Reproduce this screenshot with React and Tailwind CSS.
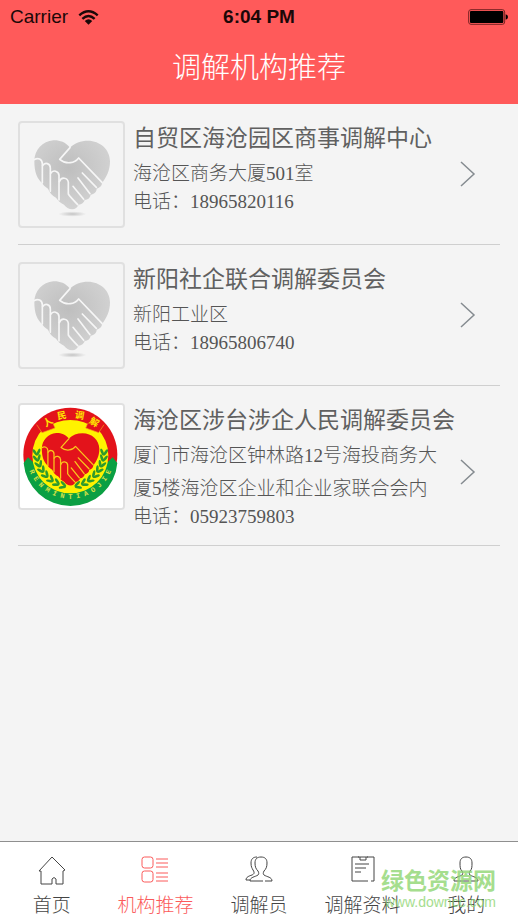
const organizations = [
  {
    name: "自贸区海沧园区商事调解中心",
    address: "海沧区商务大厦501室",
    phone: "18965820116",
  },
  {
    name: "新阳社企联合调解委员会",
    address: "新阳工业区",
    phone: "18965806740",
  },
  {
    name: "海沧区涉台涉企人民调解委员会",
    address: "厦门市海沧区钟林路12号海投商务大厦5楼海沧区企业和企业家联合会内",
    phone: "05923759803",
    emblem: true,
  },
];

const HandshakeHeart = ({ fill, line, width }) => (
  <g strokeLinecap="round" strokeLinejoin="round">
    <path
      fill={fill}
      d="M180 97C166 79 146 74 130 75C98 77 73 104 73 137C73 172 82 190 96 203C100 210 105 214 114 220C119 232 126 240 138 247C144 256 151 262 162 268C168 276 176 282 187 282C196 282 202 276 206 268C215 267 222 262 224 254C234 253 241 247 242 238C252 236 260 230 260 220C270 218 276 211 276 203C290 186 300 164 300 138C300 102 270 76 234 76C212 76 194 83 180 97Z"
    />
    <g fill="none" stroke={line} strokeWidth={width}>
      <path d="M180 97L149 132Q163 144 181 142Q196 141 206 128L276 201" />
      <path d="M217 173L259 216M204 188L240 235M189 213L221 252" />
      <path d="M73 133C84 126 96 131 97 145V203" />
      <path d="M98 151C105 139 121 144 121 158V228" />
      <path d="M122 174C129 162 146 167 147 180V254" />
      <path d="M148 199C154 183 173 187 175 201V236Q180 244 203 268" />
    </g>
  </g>
);

const PlaceholderLogo = () => (
  <svg viewBox="30 23 309 309" className="h-full w-full" aria-hidden="true">
    <defs>
      <radialGradient id="grey-heart" cx="0.45" cy="0.4" r="0.65">
        <stop offset="0" stopColor="#bebebe" />
        <stop offset="1" stopColor="#d4d4d4" />
      </radialGradient>
      <radialGradient id="heart-shadow">
        <stop offset="0" stopColor="#c4c4c4" />
        <stop offset="1" stopColor="#f4f4f4" />
      </radialGradient>
    </defs>
    <ellipse cx="187" cy="296" rx="42" ry="8" fill="url(#heart-shadow)" />
    <HandshakeHeart fill="url(#grey-heart)" line="#f6f6f6" width="5" />
  </svg>
);

const leaves = [
  [80, 172, -6],
  [81, 190, -12],
  [86, 208, -22],
  [94, 225, -32],
  [105, 241, -42],
  [120, 255, -52],
  [137, 266, -62],
  [156, 274, -72],
];

const Wheat = () => (
  <g fill="#2f9a2c">
    {leaves.map(([x, y, angle]) => (
      <g key={y} transform={`translate(${x} ${y}) rotate(${angle})`}>
        <ellipse cx="-6" cy="0" rx="4" ry="11" transform="rotate(-28)" />
        <ellipse cx="6" cy="0" rx="4" ry="11" transform="rotate(28)" />
      </g>
    ))}
  </g>
);

const EmblemLogo = () => (
  <svg
    viewBox="30 33 309 309"
    className="h-full w-full bg-white"
    aria-hidden="true"
  >
    <defs>
      <path id="emblem-bottom" d="M49 182A132 132 0 0 0 313 182" />
    </defs>
    <circle cx="181" cy="182" r="141" fill="#e3131b" />
    <path
      fill="#0b9f43"
      d="M41 207L54 190L70 205H292L308 190L322 207A141 141 0 0 1 41 207Z"
    />
    <circle cx="181" cy="184" r="114" fill="#fff200" />
    {/* Ribbon across the top with folded ends */}
    <path
      d="M76 92Q181 -6 286 92L262 106Q181 50 100 106Z"
      fill="#e3131b"
    />
    <path
      d="M80 92L96 116L135 102L129 88M282 92L266 116L227 102L233 88"
      fill="#e3131b"
      stroke="#f7a51c"
      strokeWidth="2"
    />
    <Wheat />
    <g transform="translate(362 0) scale(-1 1)">
      <Wheat />
    </g>
    <g transform="translate(40 60) scale(0.76)">
      <HandshakeHeart fill="#e3131b" line="#f9c81c" width="5" />
    </g>
    <g
      fill="#ffe600"
      fontSize="28"
      fontWeight="700"
      textAnchor="middle"
      fontFamily="'Noto Sans CJK SC', sans-serif"
    >
      <text transform="translate(119 92) rotate(-32)">人</text>
      <text transform="translate(157 74) rotate(-10)">民</text>
      <text transform="translate(207 74) rotate(10)">调</text>
      <text transform="translate(247 93) rotate(32)">解</text>
    </g>
    <text
      fill="#d8e34a"
      fontSize="21"
      fontWeight="700"
      textAnchor="middle"
      fontFamily="'Liberation Mono', monospace"
    >
      <textPath href="#emblem-bottom" startOffset="50%">
        R E N M I N T I A O J I E
      </textPath>
    </text>
  </svg>
);

const StatusBar = () => (
  <div className="grid h-[34px] grid-cols-3 items-center px-[10px] font-['Liberation_Sans',sans-serif] text-[19px] leading-6 text-[#1b0808]">
    <div className="flex items-center gap-[10px]">
      <span>Carrier</span>
      <svg viewBox="0 0 60 44" className="h-[15px] w-[21px]" aria-label="Wi-Fi">
        <g fill="none" stroke="#1b0808" strokeWidth="7">
          <path d="M3 16Q30 -8 57 16" />
          <path d="M12 26Q30 9 48 26" />
        </g>
        <path d="M19 32Q30 22 41 32L30 43Z" fill="#1b0808" />
      </svg>
    </div>
    <span className="text-center font-bold">6:04 PM</span>
    <svg
      viewBox="0 0 120 48"
      className="h-4 w-10 justify-self-end"
      aria-label="Battery"
    >
      <rect x="2" y="2" width="108" height="44" rx="7" fill="none" stroke="#7a2323" strokeWidth="3" />
      <rect x="6" y="6" width="100" height="36" rx="3" />
      <path d="M113 16Q120 18 120 24T113 32Z" />
    </svg>
  </div>
);

const OrganizationRow = ({ org }) => (
  <li className="border-b border-[#cfcfcf]">
    <a href="#detail" className="flex items-start gap-2 pt-[17px] pb-4">
      <div className="h-[107px] w-[107px] shrink-0 overflow-hidden rounded border-2 border-[#e0e0e0]">
        {org.emblem ? <EmblemLogo /> : <PlaceholderLogo />}
      </div>
      <div className="min-w-0 flex-1 text-[19px] font-light text-[#555]">
        <h2 className="text-[23px] leading-9 font-normal text-[#606060]">
          {org.name}
        </h2>
        <div className="flex items-center gap-2">
          <p className="flex-1 leading-[33px] break-all">{org.address}</p>
          <svg
            viewBox="0 0 16 28"
            className="mr-6 h-7 w-4 shrink-0 fill-none stroke-[#858b90]"
            aria-hidden="true"
          >
            <path d="M1 2L14 14L1 26" strokeWidth="1.5" />
          </svg>
        </div>
        <p className="leading-6">电话：{org.phone}</p>
      </div>
    </a>
  </li>
);

const tabs = [
  {
    label: "首页",
    icon: <path d="M3 15H1L14 1L27 14L25 15V28H18V23Q16 20 14 23V28H3V15" />,
  },
  {
    label: "机构推荐",
    active: true,
    icon: (
      <>
        <rect x="1" y="1" width="11" height="11" rx="2.5" />
        <rect x="1" y="15" width="11" height="11" rx="2.5" />
        <path d="M15 3H27M15 7H27M15 11H27M15 17H27M15 21H27M15 25H27" />
      </>
    ),
  },
  {
    label: "调解员",
    icon: (
      <>
        <path d="M20 25H27C27 21 22 21 19 19C18 18 18 17 19 15C21 13 22 11 22 7C22 3 20 1 16 1S10 3 10 7C10 11 11 13 13 15C14 17 14 18 13 19C10 21 5 21 5 25H18" />
        <path d="M12 1C8 1 6 3 6 7C6 11 7 12 8 14C10 17 9 18 7 19C4 20 1 21 1 24H5" />
      </>
    ),
  },
  {
    label: "调解资料",
    icon: (
      <>
        <path d="M10 1H3V25H19M22 25H25V1H18M9 1H19M11 1V4H17V1" />
        <path d="M6 8H20M6 12H17M6 16H12" />
      </>
    ),
  },
  {
    label: "我的",
    icon: (
      <path d="M19 25H26C26 21 21 21 18 19C17 18 17 17 18 15C20 13 20 11 20 7C20 3 18 1 14 1S8 3 8 7C8 11 8 13 10 15C11 17 11 18 10 19C7 21 2 21 2 25H17" />
    ),
  },
];

const TabBar = () => (
  <nav className="relative flex border-t border-[#8f8f8f] bg-white pb-0.5">
    {tabs.map((tab) => (
      <button
        key={tab.label}
        type="button"
        aria-current={tab.active ? "page" : undefined}
        className={`flex flex-1 basis-0 flex-col items-center gap-2.5 pt-[14px] text-[19px] leading-6 font-light whitespace-nowrap ${
          tab.active ? "text-[#fb5b5b]" : "text-[#444]"
        }`}
      >
        <svg
          viewBox="0 0 28 28"
          className="h-7 w-7 overflow-visible fill-none stroke-current"
          aria-hidden="true"
        >
          {tab.icon}
        </svg>
        <span>{tab.label}</span>
      </button>
    ))}

    {/* Site watermark */}
    <div className="pointer-events-none absolute right-[22px] bottom-2 text-[#8fd673] opacity-80">
      <p className="text-[23px] leading-5 font-bold">绿色资源网</p>
      <p className="text-right font-['Liberation_Sans',sans-serif] text-[14px] leading-5">
        www.downcc.com
      </p>
    </div>
  </nav>
);

export default function App() {
  return (
    <div className="flex min-h-screen flex-col bg-[#f4f4f4] font-['Liberation_Serif','Noto_Sans_CJK_SC',sans-serif]">
      <header className="bg-[#ff5a5a] pb-[13px]">
        <StatusBar />
        <h1 className="pt-3 text-center text-[29px] leading-[45px] font-light text-white">
          调解机构推荐
        </h1>
      </header>
      <main className="flex-1 px-[18px]">
        <ul>
          {organizations.map((org) => (
            <OrganizationRow key={org.name} org={org} />
          ))}
        </ul>
      </main>
      <TabBar />
    </div>
  );
}
